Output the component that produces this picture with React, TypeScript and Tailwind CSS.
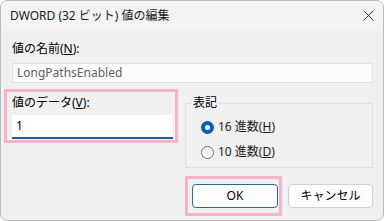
import { useState } from 'react';

const font = { fontFamily: '"Noto Sans", "Noto Sans CJK JP", sans-serif' };

function Radio({ checked, label, mnemonic, onClick }: { checked: boolean; label: string; mnemonic: string; onClick: () => void }) {
  return (
    <button type="button" onClick={onClick} className="flex h-[16px] items-center gap-[4px] text-[12px] leading-[16px] text-[#1b1b1b]">
      {checked ? (
        <span className="flex h-[13px] w-[13px] items-center justify-center rounded-full bg-[#005fb8]">
          <span className="h-[5px] w-[5px] rounded-full bg-white" />
        </span>
      ) : (
        <span className="h-[13px] w-[13px] rounded-full border border-[#707070] bg-[#f7f7f7]" />
      )}
      <span>
        {label}(<span className="underline">{mnemonic}</span>)
      </span>
    </button>
  );
}

export default function App() {
  const [hex, setHex] = useState(true);

  return (
    <div className="h-[221px] w-[385px] bg-white" style={font}>
      {/* Window */}
      <div className="flex h-[221px] w-[384px] flex-col overflow-hidden rounded-[7px] border border-[#b9b9b9] bg-[#f0f0f0]">
        {/* Title bar */}
        <div className="flex h-[29px] shrink-0 items-center justify-between bg-[#f3f3f3] pl-[9px] pr-[9px]">
          <span className="text-[12px] leading-[16px] text-[#1a1a1a]">DWORD (32 ビット) 値の編集</span>
          <svg width="11" height="11" viewBox="0 0 11 11" className="text-[#2b2b2b]">
            <path d="M0.5 0.5 L10.5 10.5 M10.5 0.5 L0.5 10.5" stroke="currentColor" strokeWidth="1" />
          </svg>
        </div>

        {/* Body */}
        <div className="flex flex-col pl-[11px] pr-[10px] pt-[11px]">
          <div className="h-[16px] text-[12px] leading-[16px] text-black">
            値の名前(<span className="underline">N</span>):
          </div>
          <div className="mt-[6px] flex h-[20px] items-center border border-[#e3e3e3] bg-[#fafafa] px-[4px] text-[12px] text-[#5f5f5f]">
            LongPathsEnabled
          </div>

          <div className="mt-[6px] flex">
            {/* Value data */}
            <div className="-ml-[8px] flex h-[54px] w-[174px] flex-col border-[3px] border-[#f5b3cb] pl-[5px] pr-[2px] pt-[3px]">
              <div className="h-[16px] text-[12px] leading-[16px] text-black">
                値のデータ(<span className="underline">V</span>):
              </div>
              <div className="mt-[4px] flex h-[24px] items-center border-b-2 border-[#1f5f93] bg-white px-[4px] text-[12px] text-black">
                1
              </div>
            </div>

            {/* Base group */}
            <div className="relative ml-[7px] mt-[14px] flex h-[65px] flex-1 flex-col gap-[9px] border border-[#dfdfdf] pl-[15px] pt-[15px]">
              <span className="absolute -top-[9px] left-[6px] bg-[#f0f0f0] px-[1px] text-[12px] leading-[16px] text-black">表記</span>
              <Radio checked={hex} label="16 進数" mnemonic="H" onClick={() => setHex(true)} />
              <Radio checked={!hex} label="10 進数" mnemonic="D" onClick={() => setHex(false)} />
            </div>
          </div>

          {/* Buttons */}
          <div className="mt-[8px] flex justify-end">
            <div className="flex h-[40px] w-[97px] items-center border-[3px] border-[#f5b3cb] pl-[4px]">
              <button type="button" className="h-[24px] w-[86px] rounded-[4px] border border-[#2a6699] bg-[#fdfdfd] text-[12px] font-normal text-black">
                OK
              </button>
            </div>
            <div className="ml-[6px] flex h-[40px] items-center">
              <button type="button" className="h-[24px] w-[85px] rounded-[4px] border border-[#d0d0d0] bg-[#fdfdfd] text-[12px] font-normal text-black">
                キャンセル
              </button>
            </div>
          </div>
        </div>
      </div>
    </div>
  );
}
